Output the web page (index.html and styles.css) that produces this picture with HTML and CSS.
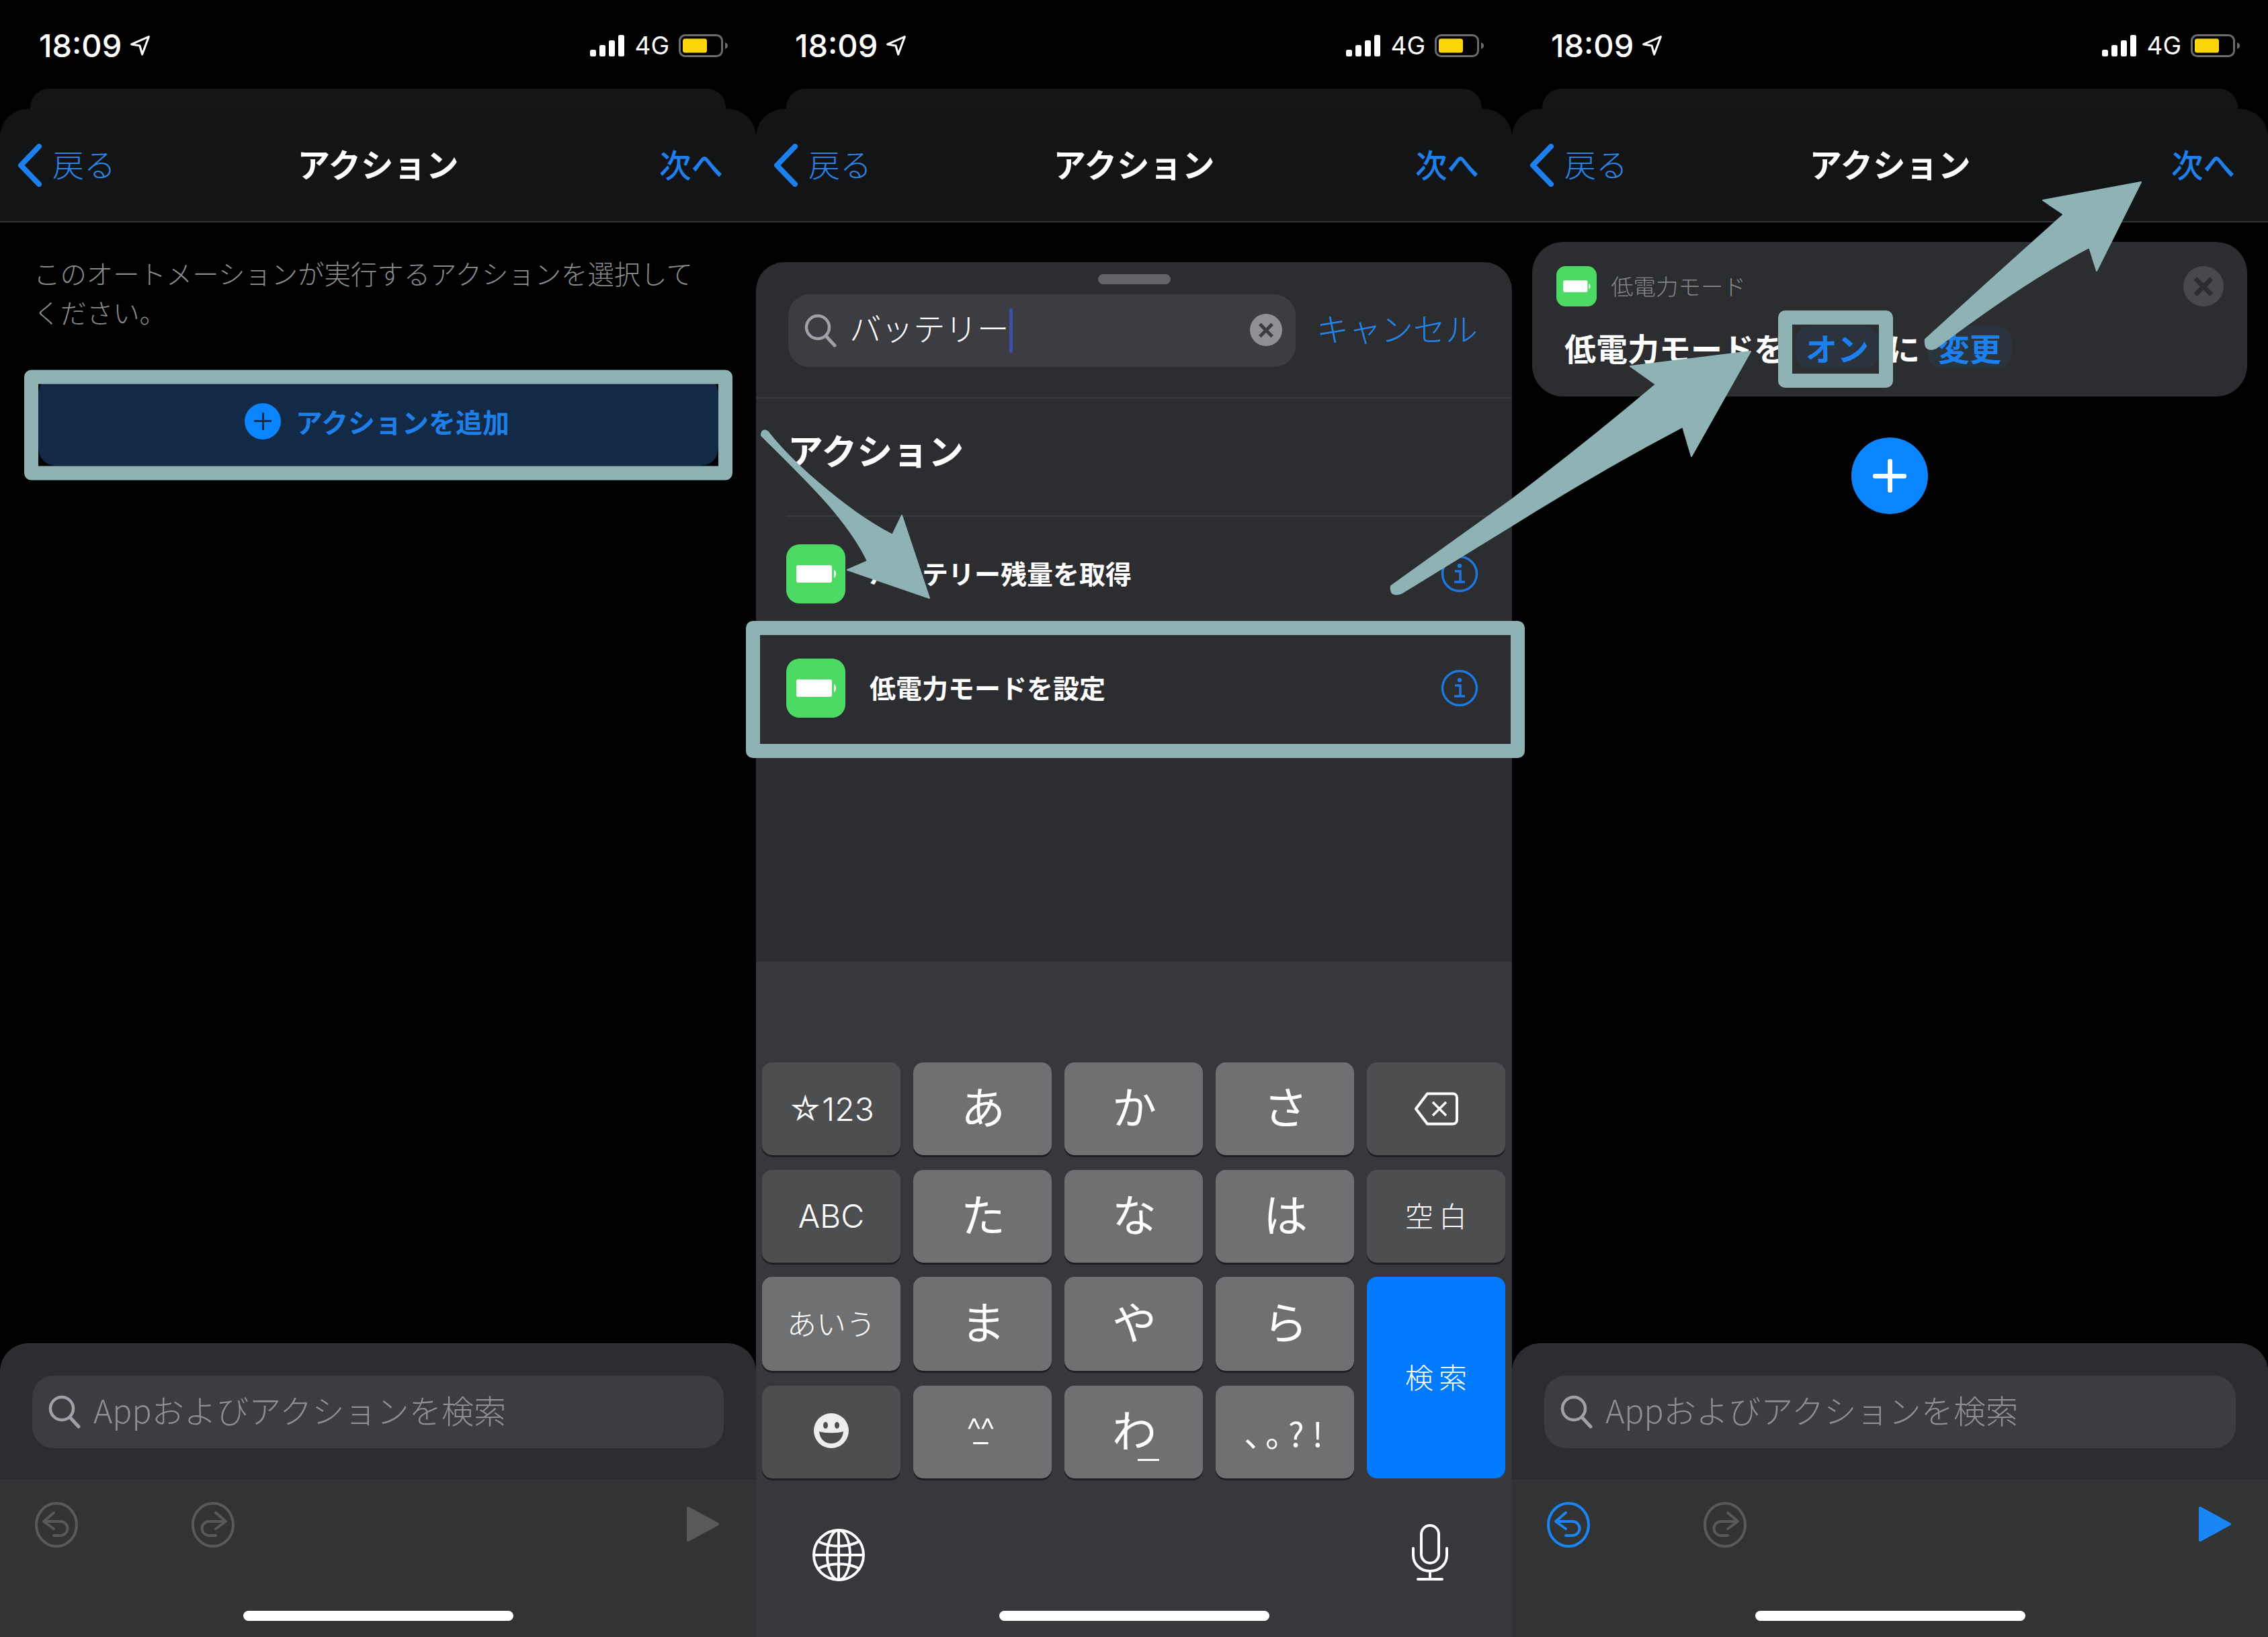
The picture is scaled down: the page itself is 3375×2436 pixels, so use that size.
FILE: index.html
```html
<!DOCTYPE html>
<html lang="ja">
<head>
<meta charset="utf-8">
<title>アクション</title>
<link rel="stylesheet" href="styles.css">
</head>
<body>
<svg class="defs" width="0" height="0" aria-hidden="true">
  <symbol id="loc" viewBox="0 0 30 30"><path d="M27.500 2.500 2.500 13.500 14.500 15.500 18 28Z" fill="none" stroke="#fff" stroke-width="3" stroke-linejoin="round"/></symbol>
  <symbol id="signal" viewBox="0 0 51 32"><rect x="0" y="22" width="9" height="10" rx="2.500" fill="#fff"/><rect x="14" y="15" width="9" height="17" rx="2.500" fill="#fff"/><rect x="28" y="8" width="9" height="24" rx="2.500" fill="#fff"/><rect x="42" y="0" width="9" height="32" rx="2.500" fill="#fff"/></symbol>
  <symbol id="batt" viewBox="0 0 74 34"><rect x="1.500" y="1.500" width="63" height="31" rx="8" fill="none" stroke="#6b6b6b" stroke-width="3"/><rect x="6" y="6.500" width="36" height="21" rx="3.500" fill="#ffd60a"/><path d="M69 12c3 1 4 3 4 5s-1 4-4 5Z" fill="#6b6b6b"/></symbol>
  <symbol id="chev" viewBox="0 0 36 64"><path d="M32 4 5 32l27 28" fill="none" stroke="#1c80ee" stroke-width="8" stroke-linecap="round" stroke-linejoin="round"/></symbol>
  <symbol id="mag" viewBox="0 0 48 50"><circle cx="20" cy="20" r="17" fill="none" stroke="currentColor" stroke-width="4.500"/><path d="M32 33 45 47" stroke="currentColor" stroke-width="5" stroke-linecap="round"/></symbol>
  <symbol id="undo" viewBox="0 0 64 70"><ellipse cx="32" cy="35" rx="30" ry="32" fill="none" stroke="currentColor" stroke-width="4"/><path d="M28 17 13 30l15 11M13 30H38a10.500 10.500 0 0 1 0 21H28" fill="none" stroke="currentColor" stroke-width="4" stroke-linecap="round" stroke-linejoin="round"/></symbol>
  <symbol id="redo" viewBox="0 0 64 70"><ellipse cx="32" cy="35" rx="30" ry="32" fill="none" stroke="currentColor" stroke-width="4"/><path d="M36 17 51 30 36 41M51 30H26a10.500 10.500 0 0 0 0 21H36" fill="none" stroke="currentColor" stroke-width="4" stroke-linecap="round" stroke-linejoin="round"/></symbol>
  <symbol id="play" viewBox="0 0 50 56"><path d="M3 4 47 28 3 52Z" fill="currentColor" stroke="currentColor" stroke-width="4" stroke-linejoin="round"/></symbol>
  <symbol id="appicon" viewBox="0 0 88 88"><rect width="88" height="88" rx="20" fill="#4cd964"/><rect x="15" y="31" width="53" height="26" rx="3" fill="#fff"/><path d="M71 38c2 1 3 3 3 6s-1 5-3 6Z" fill="#fff"/></symbol>
  <symbol id="info" viewBox="0 0 56 56"><circle cx="28" cy="28" r="25.500" fill="none" stroke="#1f78e0" stroke-width="3.500"/><circle cx="28" cy="16" r="3.200" fill="#1f78e0"/><path d="M21 24h8v16M20 40h16" fill="none" stroke="#1f78e0" stroke-width="3.500"/></symbol>
  <symbol id="globe" viewBox="0 0 80 80"><g fill="none" stroke="#fff" stroke-width="4"><circle cx="40" cy="40" r="37"/><ellipse cx="40" cy="40" rx="17" ry="37"/><path d="M40 3v74M3 40h74M10 20c18 9 42 9 60 0M10 60c18-9 42-9 60 0"/></g></symbol>
  <symbol id="mic" viewBox="0 0 56 84"><g fill="none" stroke="#fff" stroke-width="4" stroke-linecap="round"><rect x="15" y="2" width="26" height="56" rx="13"/><path d="M3 36v10c0 14 11 24 25 24s25-10 25-24V36M28 70v12M10 82h36"/></g></symbol>
  <symbol id="bksp" viewBox="0 0 66 50"><path d="M20 2.500h38a6 6 0 0 1 6 6v33a6 6 0 0 1-6 6H20L3 25Z" fill="none" stroke="#fff" stroke-width="4" stroke-linejoin="round"/><path d="M28 15l20 20M48 15 28 35" stroke="#fff" stroke-width="3.500"/></symbol>
  <symbol id="smile" viewBox="0 0 54 54"><circle cx="27" cy="27" r="26" fill="#eee"/><ellipse cx="18.500" cy="19" rx="3.500" ry="5" fill="#4d4e50"/><ellipse cx="35.500" cy="19" rx="3.500" ry="5" fill="#4d4e50"/><path d="M9 28c6 3 30 3 36 0-1 12-9 18-18 18S10 40 9 28Z" fill="#4d4e50"/></symbol>
</svg>

<main class="stage">

  <section class="phone">
    <div class="status">
      <div class="clock"><span>18:09</span><svg class="loc"><use href="#loc"/></svg></div>
      <div class="indicators"><svg class="signal"><use href="#signal"/></svg><span class="net">4G</span><svg class="batt"><use href="#batt"/></svg></div>
    </div>
    <div class="peek"></div>
    <header class="nav">
      <div class="nav-back"><svg class="chev"><use href="#chev"/></svg><span class="nav-text">戻る</span></div>
      <h1 class="nav-title">アクション</h1>
      <div class="nav-next">次へ</div>
    </header>
    <div class="content">
      <p class="hint">このオートメーションが実行するアクションを選択して<br>ください。</p>
      <div class="add-btn"><span class="add-plus"></span><span>アクションを追加</span></div>
    </div>
    <div class="bottom">
      <div class="search-wrap">
        <div class="search"><svg class="mag"><use href="#mag"/></svg><span class="placeholder">Appおよびアクションを検索</span></div>
      </div>
      <div class="toolbar">
        <svg class="tool"><use href="#undo"/></svg>
        <svg class="tool tool-redo"><use href="#redo"/></svg>
        <svg class="tool-play"><use href="#play"/></svg>
        <div class="home"></div>
      </div>
    </div>
  </section>

  <section class="phone">
    <div class="status">
      <div class="clock"><span>18:09</span><svg class="loc"><use href="#loc"/></svg></div>
      <div class="indicators"><svg class="signal"><use href="#signal"/></svg><span class="net">4G</span><svg class="batt"><use href="#batt"/></svg></div>
    </div>
    <div class="peek"></div>
    <header class="nav">
      <div class="nav-back"><svg class="chev"><use href="#chev"/></svg><span class="nav-text">戻る</span></div>
      <h1 class="nav-title">アクション</h1>
      <div class="nav-next">次へ</div>
    </header>
    <div class="sheet">
      <div class="handle"></div>
      <div class="sheet-search">
        <div class="search search-active">
          <svg class="mag"><use href="#mag"/></svg>
          <span class="query">バッテリー</span><span class="caret"></span>
          <span class="clear"></span>
        </div>
        <span class="cancel">キャンセル</span>
      </div>
      <h2 class="section-title">アクション</h2>
      <div class="row row-first"><svg class="app"><use href="#appicon"/></svg><span class="row-label">バッテリー残量を取得</span><svg class="info"><use href="#info"/></svg></div>
      <div class="row"><svg class="app"><use href="#appicon"/></svg><span class="row-label">低電力モードを設定</span><svg class="info"><use href="#info"/></svg></div>
    </div>
    <div class="keyboard">
      <div class="keys">
        <div class="key dark k-sm">☆123</div>
        <div class="key k-kana"><span>あ</span></div>
        <div class="key k-kana"><span>か</span></div>
        <div class="key k-kana"><span>さ</span></div>
        <div class="key dark"><svg class="bksp"><use href="#bksp"/></svg></div>
        <div class="key dark k-sm">ABC</div>
        <div class="key k-kana"><span>た</span></div>
        <div class="key k-kana"><span>な</span></div>
        <div class="key k-kana"><span>は</span></div>
        <div class="key dark k-wide">空白</div>
        <div class="key k-abc">あいう</div>
        <div class="key k-kana"><span>ま</span></div>
        <div class="key k-kana"><span>や</span></div>
        <div class="key k-kana"><span>ら</span></div>
        <div class="key blue k-wide">検索</div>
        <div class="key dark"><svg class="smile"><use href="#smile"/></svg></div>
        <div class="key k-face">^_^</div>
        <div class="key k-kana"><span>わ</span><span class="wa-low"></span></div>
        <div class="key k-punct"><span class="marks">、。</span><span class="qm">?!</span></div>
      </div>
      <div class="kb-foot">
        <svg class="globe"><use href="#globe"/></svg>
        <svg class="mic"><use href="#mic"/></svg>
        <div class="home"></div>
      </div>
    </div>
  </section>

  <section class="phone">
    <div class="status">
      <div class="clock"><span>18:09</span><svg class="loc"><use href="#loc"/></svg></div>
      <div class="indicators"><svg class="signal"><use href="#signal"/></svg><span class="net">4G</span><svg class="batt"><use href="#batt"/></svg></div>
    </div>
    <div class="peek"></div>
    <header class="nav">
      <div class="nav-back"><svg class="chev"><use href="#chev"/></svg><span class="nav-text">戻る</span></div>
      <h1 class="nav-title">アクション</h1>
      <div class="nav-next">次へ</div>
    </header>
    <div class="content content-card">
      <div class="card">
        <div class="card-head"><svg class="app-sm"><use href="#appicon"/></svg><span class="card-name">低電力モード</span><span class="card-x"></span></div>
        <div class="card-line"><span>低電力モードを</span><span class="pill pill-on">オン</span><span class="card-ni">に</span><span class="pill pill-change">変更</span></div>
      </div>
      <div class="fab"></div>
    </div>
    <div class="bottom">
      <div class="search-wrap">
        <div class="search"><svg class="mag"><use href="#mag"/></svg><span class="placeholder">Appおよびアクションを検索</span></div>
      </div>
      <div class="toolbar">
        <svg class="tool tool-on"><use href="#undo"/></svg>
        <svg class="tool tool-redo"><use href="#redo"/></svg>
        <svg class="tool-play tool-on"><use href="#play"/></svg>
        <div class="home"></div>
      </div>
    </div>
  </section>

  <svg class="annotations" viewBox="0 0 3375 2436" aria-hidden="true">
    <g class="frame">
      <rect x="46.500" y="561" width="1033" height="143"/>
      <rect x="1120.500" y="934.500" width="1138" height="183"/>
      <rect x="2656.500" y="472.500" width="150" height="94"/>
    </g>
    <g class="arrow">
      <path d="M1133 648C1133 640 1139 638 1144 644 1172 680 1250 755 1328 796L1342 767 1383 890 1261 848 1291 835C1260 770 1195 710 1133 648Z"/>
      <path d="M2070 872 2250 743Q2360 660 2464 572L2426 545 2605 523 2517 679 2504 635Q2380 700 2250 782L2087 882Q2068 890 2070 872Z"/>
      <path d="M2865 505Q2980 400 3071 319L3040 298 3186 271 3120 403 3109 368Q3010 420 2881 518 2863 525 2865 505Z"/>
    </g>
  </svg>
</main>
</body>
</html>
```

FILE: styles.css
```css
* { box-sizing: border-box; }
html, body { margin: 0; padding: 0; background: #000; }
body { font-family: "Noto Sans CJK JP", "Inter", sans-serif; color: #fff; }
h1, h2, p { margin: 0; font: inherit; }
.defs { position: absolute; }

.stage {
  position: relative;
  display: grid;
  grid-template-columns: repeat(3, 1125px);
  width: 3375px;
  height: 2436px;
  background: #000;
}
.phone { display: flex; flex-direction: column; height: 2436px; min-width: 0; }

/* status bar */
.status {
  height: 132px;
  flex: none;
  display: flex;
  justify-content: space-between;
  padding: 44px 41px 0 58px;
  align-items: flex-start;
}
.clock { display: flex; align-items: center; gap: 12px; font: 500 47px/48px "Inter", sans-serif; }
.loc { width: 31px; height: 31px; margin-top: -2px; }
.indicators { display: flex; align-items: center; gap: 15px; height: 48px; }
.signal { width: 51px; height: 32px; }
.net { font: 400 37px/48px "Inter", sans-serif; }
.batt { width: 74px; height: 34px; margin-left: -1px; }

/* nav */
.peek { flex: none; height: 30px; margin: 0 45px; background: #141517; border-radius: 28px 28px 0 0; }
.nav {
  flex: none;
  height: 169px;
  background: #131416;
  border-radius: 42px 42px 0 0;
  border-bottom: 2px solid #303133;
  display: grid;
  grid-template-columns: 1fr auto 1fr;
  align-items: center;
  padding: 0 26px;
}
.nav-back { display: flex; align-items: center; gap: 16px; font-size: 47px; font-weight: 300; color: #2b82e2; }
.nav-text { margin-bottom: 6px; }
.chev { width: 36px; height: 64px; }
.nav-title { font-size: 48.500px; font-weight: 700; line-height: 60px; margin-bottom: 5px; }
.nav-next { justify-self: end; margin: 0 23px 5px 0; font-size: 47.500px; font-weight: 500; color: #1f80ec; }

/* phone 1 + 3 content */
.content { flex: 1; min-height: 0; padding: 46px 56px 0 50px; }
.hint { font-size: 39.400px; line-height: 58px; font-weight: 300; color: #8a8a8f; white-space: nowrap; }
.add-btn {
  margin: 67px 0 0 7px;
  height: 133px;
  background: #132a47;
  border-radius: 26px;
  display: flex;
  align-items: center;
  justify-content: center;
  gap: 22px;
  padding: 0 4px 0 0;
  font-size: 40px;
  font-weight: 600;
  color: #1f7fe8;
}
.add-plus {
  position: relative;
  width: 54px;
  height: 54px;
  border-radius: 50%;
  background: #0a84ff;
}
.add-plus::before, .add-plus::after { content: ""; position: absolute; background: #132a47; }
.add-plus::before { left: 14px; right: 14px; top: 25.500px; height: 3px; }
.add-plus::after { top: 14px; bottom: 14px; left: 25.500px; width: 3px; }

/* bottom panel */
.bottom {
  flex: none;
  height: 437px;
  background: #2c2d30;
  border-radius: 42px 42px 0 0;
  border-top: 1px solid #3a3b3e;
  display: flex;
  flex-direction: column;
}
.search-wrap { flex: none; height: 202px; padding: 47px 48px 0; }
.search {
  height: 108px;
  border-radius: 32px;
  background: #3c3d42;
  display: flex;
  align-items: center;
  padding-left: 24px;
  color: #a0a0a8;
}
.mag { width: 48px; height: 50px; flex: none; }
.placeholder { margin: 0 0 8px 19px; font-size: 48.200px; font-weight: 300; color: #8e8e93; white-space: nowrap; }
.toolbar {
  position: relative;
  flex: 1;
  background: #313335;
  border-top: 1px solid #38393b;
  display: flex;
  align-items: flex-start;
  padding: 31px 0 0 52px;
  color: #58595b;
}
.tool { width: 64px; height: 70px; flex: none; }
.tool-redo { margin-left: 169px; }
.tool-play { width: 50px; height: 56px; margin: 6px 54px 0 auto; flex: none; }
.tool-on { color: #1a85f5; }
.home {
  position: absolute;
  left: 362px;
  bottom: 24px;
  width: 402px;
  height: 15px;
  border-radius: 8px;
  background: #fff;
}

/* sheet */
.sheet {
  flex: 1;
  min-height: 0;
  margin-top: 59px;
  background: #2c2d30;
  border-radius: 42px 42px 0 0;
  display: flex;
  flex-direction: column;
}
.handle { flex: none; width: 108px; height: 15px; margin: 18px auto 0; border-radius: 8px; background: #636468; }
.sheet-search {
  flex: none;
  height: 155px;
  margin-top: 15px;
  padding: 0 51px 0 48px;
  display: flex;
  align-items: flex-start;
  justify-content: space-between;
  border-bottom: 2px solid #3c3d41;
}
.search-active { position: relative; width: 755px; flex: none; }
.query { margin: 0 0 11px 19px; font-size: 47.500px; font-weight: 300; color: #fff; white-space: nowrap; }
.caret { width: 5px; height: 66px; margin-left: 0; border-radius: 3px; background: #3b50ab; }
.clear {
  position: absolute;
  right: 20px;
  top: 29px;
  width: 48px;
  height: 48px;
  border-radius: 50%;
  background: #909094;
}
.clear::before, .clear::after, .card-x::before, .card-x::after {
  content: "";
  position: absolute;
  left: 50%;
  top: 50%;
  width: 26px;
  height: 5px;
  margin: -2.500px 0 0 -13px;
  background: #3c3d42;
  transform: rotate(45deg);
}
.clear::after, .card-x::after { transform: rotate(-45deg); }
.cancel { font-size: 48px; font-weight: 300; color: #2584ea; line-height: 98px; white-space: nowrap; }
.section-title { flex: none; height: 174px; padding: 46px 0 0 47px; font-size: 53px; line-height: 60px; font-weight: 700; }
.row { flex: none; height: 171px; display: flex; align-items: center; padding: 0 50px 0 45px; }
.row-first { border-top: 2px solid #3c3d41; margin-left: 45px; padding-left: 0; }
.app { width: 88px; height: 88px; flex: none; }
.row-label { margin: 0 0 4px 36px; font-size: 39px; font-weight: 700; white-space: nowrap; }
.info { width: 56px; height: 56px; margin-left: auto; flex: none; }

/* keyboard */
.keyboard {
  position: relative;
  flex: none;
  height: 1005px;
  background: #37383b;
  padding: 150px 10px 0 9px;
}
.keys {
  display: grid;
  grid-template-columns: repeat(5, 206px);
  grid-template-rows: 138px 138px 140px 138px;
  column-gap: 19px;
  row-gap: 21.500px;
}
.key {
  display: flex;
  align-items: center;
  justify-content: center;
  background: #6f7072;
  border-radius: 15px;
  box-shadow: 0 3px 0 #1e1f21;
  font-weight: 300;
  position: relative;
}
.key.dark { background: #4d4e50; }
.key.blue { background: #007aff; grid-column: 5; grid-row: 3 / span 2; box-shadow: none; }
.k-kana { font-size: 66px; font-weight: 400; padding: 0 0 12px 2px; }
.k-sm { font-size: 48px; font-family: "Inter", "Noto Sans CJK JP", sans-serif; }
.k-abc { font-size: 44px; padding-bottom: 4px; }
.k-wide { font-size: 42px; letter-spacing: 8px; padding: 0 0 4px 8px; }
.k-face { font-size: 50px; font-family: "Inter", sans-serif; letter-spacing: -9px; padding: 0 14px 6px 0; }
.k-punct { font-size: 50px; font-weight: 400; text-spacing-trim: space-all; padding-left: 8px; }
.marks { letter-spacing: -18px; }
.qm { letter-spacing: 12px; margin-left: 2px; }
.wa-low { position: absolute; left: 109px; bottom: 26px; width: 32px; height: 3px; background: #fff; }
.bksp { width: 66px; height: 50px; }
.smile { width: 54px; height: 54px; margin-bottom: 4px; }
.kb-foot { display: flex; justify-content: space-between; padding: 70px 84px 0 74px; }
.globe { width: 80px; height: 80px; margin-top: 4px; }
.mic { width: 56px; height: 84px; margin-top: -2px; }

/* phone 3 card */
.content-card { padding: 29px 31px 0 30px; display: flex; flex-direction: column; align-items: center; }
.card { width: 100%; height: 230px; background: #2c2d30; border-radius: 46px; padding: 36px 36px 0; }
.card-head { display: flex; align-items: center; height: 60px; }
.app-sm { width: 60px; height: 60px; flex: none; }
.card-name { margin: 0 0 3px 21px; font-size: 33.500px; font-weight: 300; color: #85858a; }
.card-x {
  position: relative;
  margin-left: auto;
  margin-right: -1px;
  width: 60px;
  height: 60px;
  border-radius: 50%;
  background: #48494c;
}
.card-x::before, .card-x::after { background: #2c2d30; width: 34px; height: 7px; margin: -3.500px 0 0 -17px; }
.card-line { display: flex; align-items: center; margin: 29px 0 0 12px; font-size: 47px; line-height: 58px; font-weight: 700; white-space: nowrap; }
.pill { padding: 3px 15px; border-radius: 22px; background: #2b333d; color: #1c80ee; }
.pill-on { margin-left: 15px; }
.card-ni { margin-left: 14px; }
.pill-change { margin-left: 12px; }
.fab {
  position: relative;
  width: 114px;
  height: 114px;
  margin-top: 61px;
  border-radius: 50%;
  background: #0a84ff;
}
.fab::before, .fab::after { content: ""; position: absolute; background: #fff; border-radius: 3px; }
.fab::before { left: 32px; right: 32px; top: 53.500px; height: 7px; }
.fab::after { top: 32px; bottom: 32px; left: 53.500px; width: 7px; }

/* annotations drawn over the screenshots */
.annotations { position: absolute; left: 0; top: 0; width: 3375px; height: 2436px; pointer-events: none; }
.frame rect { fill: none; stroke: #8fb3b5; stroke-width: 21; stroke-linejoin: round; }
.arrow path { fill: #8fb3b5; stroke: #8fb3b5; stroke-width: 2; stroke-linejoin: round; }
```
